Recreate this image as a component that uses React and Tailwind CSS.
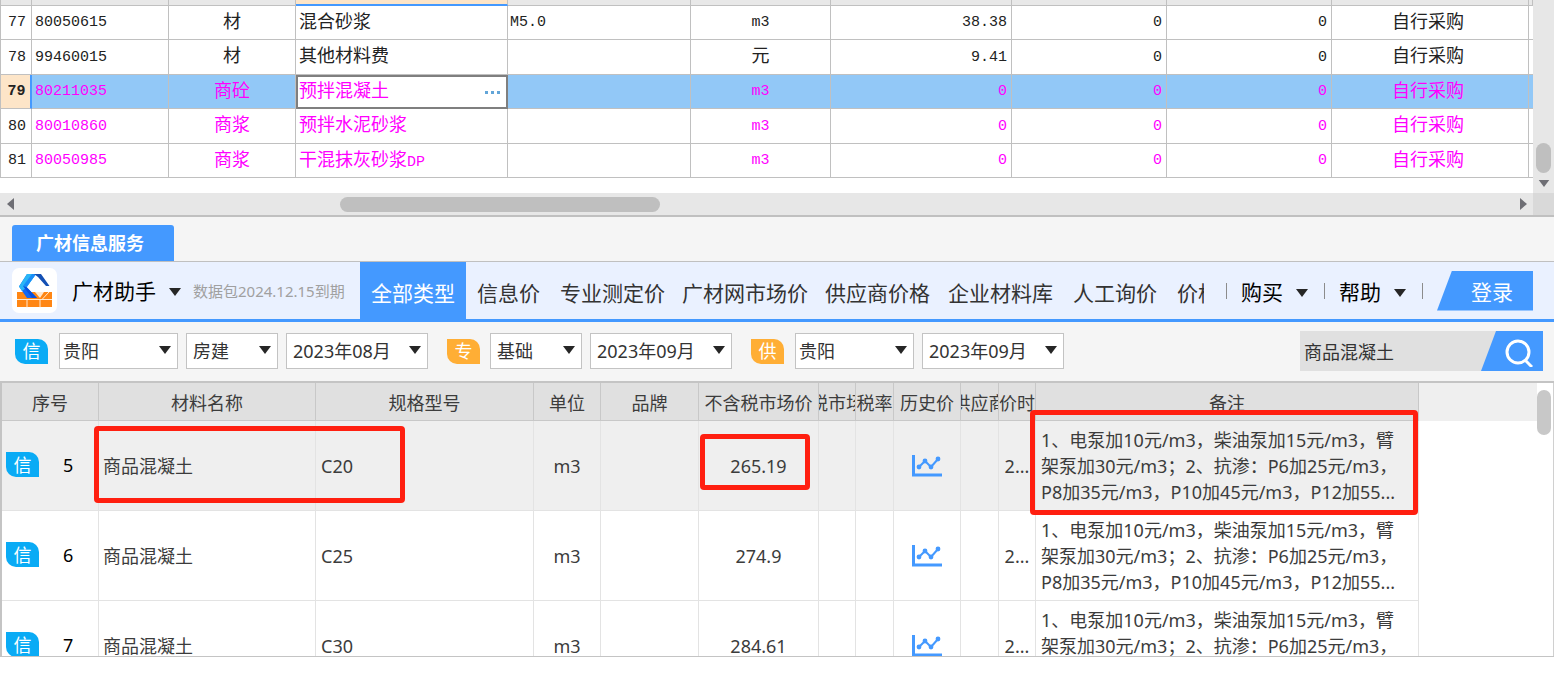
import React from 'react';
import clsx from 'clsx';

const materials = [
  { no: 77, code: '80050615', kind: '材', name: '混合砂浆', spec: 'M5.0', unit: 'm3', price: '38.38' },
  { no: 78, code: '99460015', kind: '材', name: '其他材料费', spec: '', unit: '元', price: '9.41' },
  { no: 79, code: '80211035', kind: '商砼', name: '预拌混凝土', spec: '', unit: 'm3', price: '0', pink: true, selected: true },
  { no: 80, code: '80010860', kind: '商浆', name: '预拌水泥砂浆', spec: '', unit: 'm3', price: '0', pink: true },
  { no: 81, code: '80050985', kind: '商浆', name: '干混抹灰砂浆', suffix: 'DP', spec: '', unit: 'm3', price: '0', pink: true },
];

const categories = [
  { label: '全部类型', pad: 'px-[11px]', active: true },
  { label: '信息价', pad: 'px-[11px]' },
  { label: '专业测定价', pad: 'px-[9px]' },
  { label: '广材网市场价', pad: 'px-2' },
  { label: '供应商价格', pad: 'px-[9px]' },
  { label: '企业材料库', pad: 'px-[9px]' },
  { label: '人工询价', pad: 'px-[11px]' },
  { label: '价格', pad: 'px-[9px]' },
];

const headers = [
  '序号', '材料名称', '规格型号', '单位', '品牌', '不含税市场价',
  '含税市场价', '税率', '历史价', '供应商', '报价时间', '备注',
];

const prices = [
  { no: 5, spec: 'C20', price: '265.19' },
  { no: 6, spec: 'C25', price: '274.9' },
  { no: 7, spec: 'C30', price: '284.61' },
];

const remark = [
  '1、电泵加10元/m3，柴油泵加15元/m3，臂',
  '架泵加30元/m3；2、抗渗：P6加25元/m3，',
  'P8加35元/m3，P10加45元/m3，P12加55...',
];

const Caret = ({ className, color = 'fill-[#262626]' }) => (
  <svg viewBox="0 0 12 8" className={clsx('w-3', color, className)} aria-hidden="true">
    <path d="M0 0h12L6 8z" />
  </svg>
);

const Logo = () => (
  <svg viewBox="0 0 45 45" className="h-[45px] w-[45px] shrink-0" aria-hidden="true">
    <rect width="45" height="45" rx="7" fill="#fff" />
    <path d="M5 24h35v15H5z" fill="#ff8614" />
    <path d="M5 31.5h35M15 31.500v8M28 31.500v8M37 24l-7 7.500" fill="none" stroke="#ffe9d2" strokeWidth="1" />
    <path d="M23 24h9l-4 6z" fill="#ffe9d2" />
    <path d="M24 6L14.500 19 25 30H15L7 18.500 15 6z" fill="#1268f4" />
    <path d="M15 6h9l-9 13-5 4-3-4.500z" fill="#2bb6f6" />
    <path d="M20 6h4l-9.500 13-3.500-1z" fill="#1a8df8" />
    <path d="M14.500 19L25 30h-5L11 18z" fill="#0b50dc" />
    <path d="M22 6h7l8.500 12H34L26 9z" fill="#1450b4" />
  </svg>
);

const TrendIcon = () => (
  <svg viewBox="0 0 30 22" className="mx-auto h-[22px] w-[30px]" aria-hidden="true">
    <path d="M1.500 0v20H30" fill="none" stroke="#4499ff" strokeWidth="3" />
    <path d="M7 12l6-6 6 6 7-8" fill="none" stroke="#4499ff" strokeWidth="2" />
    <g fill="#4499ff">
      <circle cx="7" cy="12" r="2.400" />
      <circle cx="13" cy="6" r="2.400" />
      <circle cx="19" cy="12" r="2.400" />
      <circle cx="26" cy="4" r="2.400" />
    </g>
  </svg>
);

const Badge = ({ children, className }) => (
  <span
    className={clsx(
      'inline-flex h-[25px] w-[33px] shrink-0 items-center justify-center rounded-tr-[10px] rounded-bl-[10px] text-lg leading-none text-white',
      className
    )}
  >
    {children}
  </span>
);

const Picker = ({ label, value, width, pad }) => (
  <div className={clsx('relative h-9 shrink-0', width)}>
    <select
      aria-label={label}
      defaultValue={value}
      className={clsx('h-full w-full appearance-none border border-[#c3c3c3] bg-white text-lg leading-none text-[#333]', pad)}
    >
      <option>{value}</option>
    </select>
    <Caret className="pointer-events-none absolute top-[13px] right-[7px] h-2" />
  </div>
);

// Estimate grid
const MaterialGrid = () => (
  <section className="flex h-[193px] bg-white">
    <div className="min-w-0 flex-1 overflow-hidden">
      <table className="w-full table-fixed border-separate border-spacing-0 border-l border-[#c0c0c0] font-['Liberation_Mono','Noto_Sans_CJK_SC',monospace] text-[15px] leading-none text-[#222]">
        <colgroup>
          <col className="w-[31px]" />
          <col className="w-[137px]" />
          <col className="w-[127px]" />
          <col className="w-[212px]" />
          <col className="w-[183px]" />
          <col className="w-[140px]" />
          <col />
          <col className="w-[155px]" />
          <col className="w-[165px]" />
          <col className="w-[197px]" />
          <col className="w-[4px]" />
        </colgroup>
        <thead>
          <tr className="h-[6px]">
            {Array.from({ length: 11 }, (_, i) => (
              <td
                key={i}
                className={clsx(
                  'h-[6px] border-r border-[#c0c0c0] p-0',
                  i === 3 ? 'border-b-2 border-b-[#4499ff] bg-[#fde5c8]' : 'border-b bg-[#e8e8e8]'
                )}
              />
            ))}
          </tr>
        </thead>
        <tbody>
          {materials.map((m, i) => {
            const cell = clsx(
              'border-r border-b border-[#c0c0c0] p-0',
              m.pink && 'text-[#ff00ff]',
              m.selected && 'bg-[#92c8f7]'
            );
            return (
              <tr key={m.no} className={i % 2 ? 'h-[35px]' : 'h-[34px]'}>
                <th
                  scope="row"
                  className={clsx(
                    'border-b border-[#c0c0c0] p-0 pl-0.5',
                    m.selected ? 'border-r-2 border-r-[#4499ff] bg-[#fde5c8] font-bold' : 'border-r font-normal'
                  )}
                >
                  {m.no}
                </th>
                <td className={clsx(cell, 'pl-[3px]')}>{m.code}</td>
                <td className={clsx(cell, 'text-center text-lg leading-none')}>{m.kind}</td>
                {m.selected ? (
                  <td className="border-2 border-[#7f7f7f] bg-white p-0 pl-px text-lg leading-none text-[#ff00ff]">
                    <div className="flex items-center justify-between">
                      {m.name}
                      <button aria-label="选择材料" className="mr-1.5 flex gap-[3px]">
                        <i className="h-[3px] w-[3px] bg-[#62a5d8]" />
                        <i className="h-[3px] w-[3px] bg-[#62a5d8]" />
                        <i className="h-[3px] w-[3px] bg-[#62a5d8]" />
                      </button>
                    </div>
                  </td>
                ) : (
                  <td className={clsx(cell, 'pl-[3px] text-lg leading-none')}>
                    {m.name}
                    {m.suffix && <span className="text-[15px]">{m.suffix}</span>}
                  </td>
                )}
                <td className={clsx(cell, 'pl-0.5')}>{m.spec}</td>
                <td className={clsx(cell, 'text-center', m.unit === '元' && 'text-lg leading-none')}>{m.unit}</td>
                <td className={clsx(cell, 'pr-1 text-right')}>{m.price}</td>
                <td className={clsx(cell, 'pr-1 text-right')}>0</td>
                <td className={clsx(cell, 'pr-1 text-right')}>0</td>
                <td className={clsx(cell, 'pr-1 text-center text-lg leading-none')}>自行采购</td>
                <td className={clsx('border-b border-[#c0c0c0] p-0', m.selected && 'bg-[#92c8f7]')} />
              </tr>
            );
          })}
        </tbody>
      </table>
    </div>
    <div className="flex w-[21px] flex-col items-center justify-end bg-[#e7e7e7] pb-1.5">
      <div className="h-[30px] w-[15px] rounded-full bg-[#bfbfbf]" />
      <Caret className="mt-[7px] h-[7px]" color="fill-[#6e6e74]" />
    </div>
  </section>
);

const HorizontalScroll = () => (
  <div className="flex h-[22px] bg-[#e7e7e7]">
    <div className="flex flex-1 items-center pr-[6px] pl-[7px]">
      <svg viewBox="0 0 7 12" className="h-3 w-[7px] fill-[#6e6e74]" aria-hidden="true">
        <path d="M7 0v12L0 6z" />
      </svg>
      <div className="flex-1 pl-[21%]">
        <div className="ml-[7px] h-[15px] w-[320px] rounded-full bg-[#bfbfbf]" />
      </div>
      <svg viewBox="0 0 7 12" className="h-3 w-[7px] fill-[#6e6e74]" aria-hidden="true">
        <path d="M0 0v12l7-6z" />
      </svg>
    </div>
    <div className="w-[21px] bg-[#d9d9d9]" />
  </div>
);

const ServiceHeader = () => (
  <header className="flex h-[60px] items-stretch border-b-[3px] border-[#4499ff] bg-[#eaf1ff] pl-3 text-[21px] leading-none text-[#333]">
    <div className="flex items-center">
      <Logo />
      <button className="ml-[15px] flex items-center pt-0.5 text-black">
        广材助手
        <Caret className="ml-[13px] h-2" />
      </button>
      <span className="ml-3 w-[167px] pt-0.5 text-[15px] whitespace-nowrap text-[#a0a0a0]">数据包2024.12.15到期</span>
    </div>
    <nav className="flex min-w-0 flex-1 overflow-hidden">
      {categories.map((c) => (
        <a
          key={c.label}
          href="#"
          className={clsx(
            'flex shrink-0 items-center pt-1.5 whitespace-nowrap',
            c.pad,
            c.active && 'bg-[#4499ff] text-white'
          )}
        >
          {c.label}
        </a>
      ))}
    </nav>
    <div className="flex shrink-0 items-center pl-[22px] text-black">
      {['购买', '帮助'].map((label) => (
        <React.Fragment key={label}>
          <span className="h-4 w-px bg-[#8c8c8c]" />
          <button className="flex items-center pt-1 pr-4 pl-[14px]">
            {label}
            <Caret className="ml-[13px] h-2" />
          </button>
        </React.Fragment>
      ))}
      <span className="h-4 w-px bg-[#8c8c8c]" />
      <button className="mr-[21px] ml-[14px] h-10 w-24 bg-[#4499ff] pt-1 pl-3.5 text-white [clip-path:polygon(15px_0,100%_0,100%_100%,0_100%)]">
        登录
      </button>
    </div>
  </header>
);

const FilterBar = () => (
  <div className="flex h-[59px] items-center bg-[#f5f5f5] pr-[11px] pb-px pl-[15px]">
    <Badge className="bg-[#0aabf5]">信</Badge>
    <div className="ml-[11px] flex gap-2">
      <Picker label="信息价地区" value="贵阳" width="w-[119px]" pad="pl-[3px]" />
      <Picker label="信息价专业" value="房建" width="w-[92px]" pad="pl-1.5" />
      <Picker label="信息价月份" value="2023年08月" width="w-[142px]" pad="pl-1.5" />
    </div>
    <Badge className="ml-[19px] bg-[#ffae35]">专</Badge>
    <div className="ml-[10px] flex gap-2">
      <Picker label="测定价类别" value="基础" width="w-[92px]" pad="pl-1.5" />
      <Picker label="测定价月份" value="2023年09月" width="w-[142px]" pad="pl-1.5" />
    </div>
    <Badge className="ml-[19px] bg-[#ffae35]">供</Badge>
    <div className="ml-[11px] flex gap-2">
      <Picker label="供应商地区" value="贵阳" width="w-[119px]" pad="pl-[3px]" />
      <Picker label="供应商月份" value="2023年09月" width="w-[142px]" pad="pl-1.5" />
    </div>
    <form className="ml-auto flex h-10 bg-[#e0e0e0]" onSubmit={(e) => e.preventDefault()}>
      <input
        aria-label="搜索材料"
        defaultValue="商品混凝土"
        className="w-[181px] bg-transparent pl-1 text-lg leading-none text-[#333] outline-none"
      />
      <button
        aria-label="搜索"
        className="flex w-[62px] items-center justify-center bg-[#4499ff] pt-1 pl-3.5 [clip-path:polygon(15px_0,100%_0,100%_100%,0_100%)]"
      >
        <svg viewBox="0 0 28 28" className="h-7 w-7" fill="none" stroke="#fff" strokeWidth="3" aria-hidden="true">
          <circle cx="13" cy="13" r="11" />
          <path d="M20 21l7 7" />
        </svg>
      </button>
    </form>
  </div>
);

const PriceTable = () => (
  <section className="relative flex h-[276px] overflow-hidden border-t-2 border-b border-l-2 border-[#c4c4c4] bg-white">
    <table className="w-[1417px] shrink-0 table-fixed border-separate border-spacing-0 text-lg leading-none text-[#3c3c3c]">
      <colgroup>
        <col className="w-[97px]" />
        <col className="w-[217px]" />
        <col className="w-[218px]" />
        <col className="w-[67px]" />
        <col className="w-[98px]" />
        <col className="w-[120px]" />
        <col className="w-[37px]" />
        <col className="w-[38px]" />
        <col className="w-[67px]" />
        <col className="w-[38px]" />
        <col className="w-[37px]" />
        <col className="w-[383px]" />
      </colgroup>
      <thead>
        <tr className="h-[38px] bg-[#e0e0e0]">
          {headers.map((h) => (
            <th key={h} scope="col" className="border-r border-b border-[#c8c8c8] p-0 font-normal">
              <div className="flex justify-center overflow-hidden pt-1.5 pb-1">
                <span className="shrink-0 whitespace-nowrap">{h}</span>
              </div>
            </th>
          ))}
        </tr>
      </thead>
      <tbody>
        {prices.map((p, i) => (
          <tr
            key={p.no}
            className={clsx('h-[90px] [&>td]:border-r [&>td]:border-b [&>td]:border-[#e3e3e3] [&>td]:p-0', i === 0 && 'bg-[#efefef]')}
          >
            <td>
              <div className="flex items-center pb-0.5 pl-1">
                <Badge className="bg-[#0aabf5]">信</Badge>
                <span className="ml-6 text-black">{p.no}</span>
              </div>
            </td>
            <td>
              <div className="pl-1">商品混凝土</div>
            </td>
            <td>
              <div className="pl-[5px]">{p.spec}</div>
            </td>
            <td className="text-center">m3</td>
            <td />
            <td className="text-center">{p.price}</td>
            <td />
            <td />
            <td>
              <TrendIcon />
            </td>
            <td />
            <td className="text-center">2...</td>
            <td>
              <div className="pl-[5px] leading-[26px] whitespace-nowrap">
                {remark.map((line) => (
                  <p key={line}>{line}</p>
                ))}
              </div>
            </td>
          </tr>
        ))}
      </tbody>
    </table>
    <div className="h-[38px] flex-1 bg-[#efefef]" />
    <div className="w-[17px] border-r border-[#d0d0d0] pt-[7px]">
      <div className="h-[45px] w-[14px] rounded-full bg-[#c8c8c8]" />
    </div>

    {/* Highlight marks */}
    <div className="absolute top-[43px] left-[92px] h-[77px] w-[311px] rounded border-5 border-[#ff1f10]" />
    <div className="absolute top-[51px] left-[698px] h-[56px] w-[110px] rounded border-5 border-[#ff1f10]" />
    <div className="absolute top-[27px] left-[1028px] h-[105px] w-[388px] rounded border-5 border-[#ff1f10]" />
  </section>
);

export default function App() {
  return (
    <main className="bg-white font-['Noto_Sans','Noto_Sans_CJK_SC',sans-serif]">
      <MaterialGrid />
      <HorizontalScroll />
      <div className="flex border-t-2 border-b border-[#c0c0c0] bg-[#f5f5f5] pt-2 pl-3">
        <button className="h-9 w-[162px] rounded-t-[3px] bg-[#4499ff] pr-1.5 text-lg leading-none font-bold text-white">
          广材信息服务
        </button>
      </div>
      <ServiceHeader />
      <FilterBar />
      <PriceTable />
    </main>
  );
}
